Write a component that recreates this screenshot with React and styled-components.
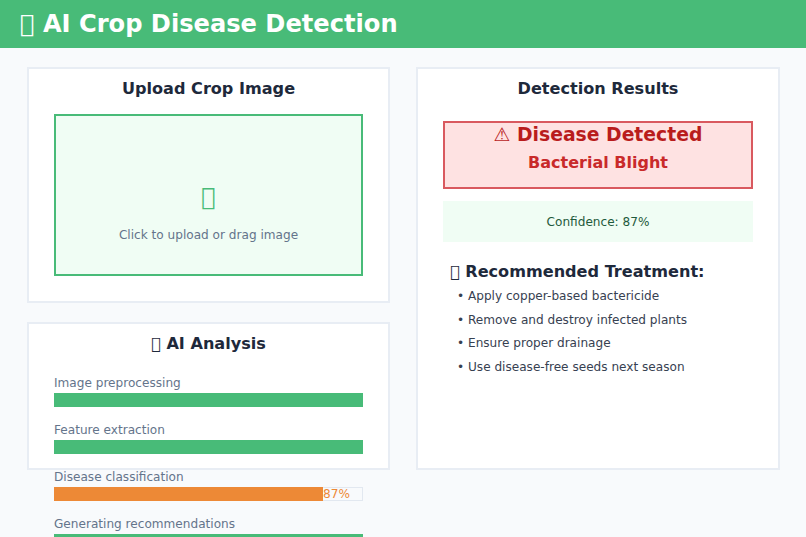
import styled, { createGlobalStyle } from "styled-components";

const GlobalStyle = createGlobalStyle`
  html, body {
    margin: 0;
    padding: 0;
    height: 100%;
    overflow: hidden;
    background: #f8fafc;
    font-family: "DejaVu Sans", sans-serif;
  }
  * {
    box-sizing: border-box;
  }
`;

const Page = styled.div`
  width: 806px;
  height: 537px;
  overflow: hidden;
  display: flex;
  flex-direction: column;
`;

const Header = styled.header`
  height: 48px;
  flex: none;
  padding: 0 20px;
  display: flex;
  align-items: center;
  background: #48bb78;
`;

const AppTitle = styled.h1`
  margin: 0;
  color: white;
  font-size: 24.15px;
  font-weight: 700;
`;

const Main = styled.main`
  display: grid;
  grid-template-columns: 363px 364px;
  gap: 26px;
  padding: 19px 26px 0 27px;
  height: 423px;
  flex: none;
`;

const Column = styled.div`
  display: flex;
  flex-direction: column;
  gap: 19px;
  min-height: 0;
`;

const Card = styled.section`
  background: white;
  border: 2px solid #e8edf4;
  padding: 10px 25px 0;
  height: ${(p) => p.$height};
  min-height: 0;
`;

const CardTitle = styled.h2`
  margin: 0;
  color: #1e293b;
  font-size: 16.1px;
  font-weight: 700;
  line-height: 20px;
  text-align: center;
`;

const UploadBox = styled.div`
  height: 162px;
  margin-top: 15px;
  padding-top: 32px;
  border: 2px solid #48bb78;
  background: #f0fdf4;
  display: flex;
  flex-direction: column;
  align-items: center;
  justify-content: center;
`;

const UploadIcon = styled.div`
  color: #48bb78;
  font-size: 24px;
  line-height: 34px;
`;

const UploadText = styled.div`
  margin-top: 13px;
  color: #64748b;
  font-size: 12.1px;
  line-height: 16px;
`;

const Steps = styled.div`
  margin-top: 21px;
  display: flex;
  flex-direction: column;
  gap: 15px;
`;

const StepLabel = styled.div`
  color: #64748b;
  font-size: 12.1px;
  line-height: 16px;
  margin-bottom: 2px;
`;

const Track = styled.div`
  height: 14px;
  background: #f8fafc;
  border: 1px solid #e2e8f0;
  position: relative;
`;

const Fill = styled.div`
  position: absolute;
  top: -1px;
  bottom: -1px;
  left: -1px;
  background: ${(p) => p.$color};
`;

const Percent = styled.span`
  position: absolute;
  top: -1px;
  left: 268px;
  color: #ed8936;
  font-size: 12.1px;
  line-height: 14px;
`;

const Alert = styled.div`
  height: 68px;
  margin-top: 22px;
  border: 2px solid #d9595f;
  background: #fee2e2;
  text-align: center;
`;

const AlertTitle = styled.div`
  color: #b91c1c;
  font-size: 18.8px;
  font-weight: 700;
  line-height: 24px;
`;

const AlertName = styled.div`
  color: #c92a2a;
  font-size: 16px;
  font-weight: 700;
  line-height: 20px;
  margin-top: 6px;
`;

const Confidence = styled.div`
  height: 41px;
  margin-top: 12px;
  background: #f0fdf4;
  color: #1f5a3c;
  font-size: 12.1px;
  display: flex;
  align-items: center;
  justify-content: center;
`;

const TreatmentTitle = styled.h3`
  margin: 20px 0 0 7px;
  color: #1e293b;
  font-size: 16.1px;
  font-weight: 700;
  line-height: 20px;
`;

const TreatmentList = styled.ul`
  list-style: none;
  margin: 3px 0 0 14px;
  padding: 0;
`;

const TreatmentItem = styled.li`
  color: #374151;
  font-size: 12.1px;
  line-height: 23.5px;
`;

const steps = [
  { label: "Image preprocessing", value: 100, color: "#48bb78" },
  { label: "Feature extraction", value: 100, color: "#48bb78" },
  { label: "Disease classification", value: 87, color: "#ed8936", showValue: true },
  { label: "Generating recommendations", value: 100, color: "#48bb78" },
];

const treatments = [
  "Apply copper-based bactericide",
  "Remove and destroy infected plants",
  "Ensure proper drainage",
  "Use disease-free seeds next season",
];

// the reference shows missing-glyph boxes where the icons would be
const MISSING = "\uE000";

export default function App() {
  return (
    <Page>
      <GlobalStyle />
      <Header>
        <AppTitle>{MISSING} AI Crop Disease Detection</AppTitle>
      </Header>
      <Main>
        <Column>
          <Card $height="236px">
            <CardTitle>Upload Crop Image</CardTitle>
            <UploadBox>
              <UploadIcon>{MISSING}</UploadIcon>
              <UploadText>Click to upload or drag image</UploadText>
            </UploadBox>
          </Card>
          <Card $height="148px">
            <CardTitle>{MISSING} AI Analysis</CardTitle>
            <Steps>
              {steps.map((step) => (
                <div key={step.label}>
                  <StepLabel>{step.label}</StepLabel>
                  <Track>
                    <Fill $color={step.color} style={{ width: `calc(${step.value}% + 2px)` }} />
                    {step.showValue && <Percent>{step.value}%</Percent>}
                  </Track>
                </div>
              ))}
            </Steps>
          </Card>
        </Column>
        <Card $height="403px">
          <CardTitle>Detection Results</CardTitle>
          <Alert>
            <AlertTitle>⚠ Disease Detected</AlertTitle>
            <AlertName>Bacterial Blight</AlertName>
          </Alert>
          <Confidence>Confidence: 87%</Confidence>
          <TreatmentTitle>{MISSING} Recommended Treatment:</TreatmentTitle>
          <TreatmentList>
            {treatments.map((item) => (
              <TreatmentItem key={item}>• {item}</TreatmentItem>
            ))}
          </TreatmentList>
        </Card>
      </Main>
    </Page>
  );
}
